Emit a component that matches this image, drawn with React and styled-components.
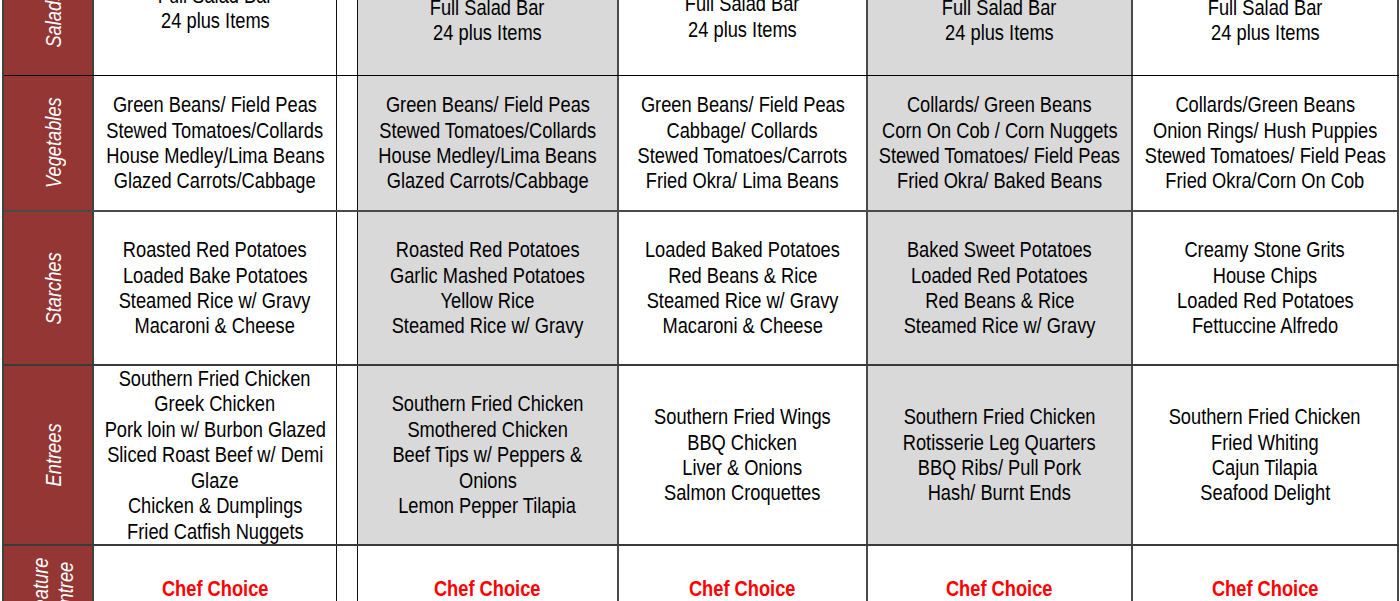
import React from "react";
import styled, { createGlobalStyle } from "styled-components";

const GlobalStyle = createGlobalStyle`
  *, *::before, *::after {
    box-sizing: border-box;
  }
  html, body {
    margin: 0;
    padding: 0;
    background: #ffffff;
    overflow: hidden;
  }
  body {
    font-family: "Liberation Sans", Arial, sans-serif;
  }
`;

const COLUMNS = "90px 243px 21px 261px 249px 265px 266px";

const rows = [
  {
    label: "Salads",
    height: 111,
    divider: "1px solid #000",
    cells: [
      { lines: ["Full Salad Bar", "24 plus Items"], lift: 24 },
      { lines: ["Full Salad Bar", "24 plus Items"], lift: 0 },
      { lines: ["Full Salad Bar", "24 plus Items"], lift: 7 },
      { lines: ["Full Salad Bar", "24 plus Items"], lift: 0 },
      { lines: ["Full Salad Bar", "24 plus Items"], lift: 0 },
    ],
  },
  {
    label: "Vegetables",
    height: 136,
    divider: "2px solid #4a4a4a",
    cells: [
      { lines: ["Green Beans/ Field Peas", "Stewed Tomatoes/Collards", "House Medley/Lima Beans", "Glazed Carrots/Cabbage"] },
      { lines: ["Green Beans/ Field Peas", "Stewed Tomatoes/Collards", "House Medley/Lima Beans", "Glazed Carrots/Cabbage"] },
      { lines: ["Green Beans/ Field Peas", "Cabbage/ Collards", "Stewed Tomatoes/Carrots", "Fried Okra/ Lima Beans"] },
      { lines: ["Collards/ Green Beans", "Corn On Cob / Corn Nuggets", "Stewed Tomatoes/ Field Peas", "Fried Okra/ Baked Beans"] },
      { lines: ["Collards/Green Beans", "Onion Rings/ Hush Puppies", "Stewed Tomatoes/ Field Peas", "Fried Okra/Corn On Cob"] },
    ],
  },
  {
    label: "Starches",
    height: 154,
    divider: "2px solid #3a3a3a",
    cells: [
      { lines: ["Roasted Red Potatoes", "Loaded Bake Potatoes", "Steamed Rice w/ Gravy", "Macaroni & Cheese"] },
      { lines: ["Roasted Red Potatoes", "Garlic Mashed Potatoes", "Yellow Rice", "Steamed Rice w/ Gravy"] },
      { lines: ["Loaded Baked Potatoes", "Red Beans & Rice", "Steamed Rice w/ Gravy", "Macaroni & Cheese"] },
      { lines: ["Baked Sweet Potatoes", "Loaded Red Potatoes", "Red Beans & Rice", "Steamed Rice w/ Gravy"] },
      { lines: ["Creamy Stone Grits", "House Chips", "Loaded Red Potatoes", "Fettuccine Alfredo"] },
    ],
  },
  {
    label: "Entrees",
    height: 180,
    divider: "2px solid #3a3a3a",
    cells: [
      {
        lines: [
          "Southern Fried Chicken",
          "Greek Chicken",
          "Pork loin w/ Burbon Glazed",
          "Sliced Roast Beef w/ Demi",
          "Glaze",
          "Chicken & Dumplings",
          "Fried Catfish Nuggets",
        ],
      },
      { lines: ["Southern Fried Chicken", "Smothered Chicken", "Beef Tips w/ Peppers &", "Onions", "Lemon Pepper Tilapia"] },
      { lines: ["Southern Fried Wings", "BBQ Chicken", "Liver & Onions", "Salmon Croquettes"] },
      { lines: ["Southern Fried Chicken", "Rotisserie Leg Quarters", "BBQ Ribs/ Pull Pork", "Hash/ Burnt Ends"] },
      { lines: ["Southern Fried Chicken", "Fried Whiting", "Cajun Tilapia", "Seafood Delight"] },
    ],
  },
  {
    label: "Feature Entree",
    height: 88,
    divider: "2px solid #3a3a3a",
    special: true,
    cells: [
      { lines: ["Chef Choice"] },
      { lines: ["Chef Choice"] },
      { lines: ["Chef Choice"] },
      { lines: ["Chef Choice"] },
      { lines: ["Chef Choice"] },
    ],
  },
];

const shaded = [false, true, false, true, false];
const borders = ["1px solid #111", "2px solid #4a4a4a", "2px solid #4a4a4a", "2px solid #4a4a4a", "2px solid #4a4a4a"];

const App = () => (
  <>
    <GlobalStyle />
    <Page>
      <Table>
        {rows.map((row) => (
          <Row key={row.label} $height={row.height} $divider={row.divider}>
            <LabelCell>
              <LabelText>{row.label}</LabelText>
            </LabelCell>
            {row.cells.map((cell, i) => (
              <React.Fragment key={i}>
                <MenuCell
                  $shaded={shaded[i] && !row.special}
                  $edge={borders[i]}
                  $lift={cell.lift || 0}
                >
                  {cell.lines.map((line, j) =>
                    row.special ? <ChefLine key={j}>{line}</ChefLine> : <Line key={j}>{line}</Line>
                  )}
                </MenuCell>
                {i === 0 && <Spacer />}
              </React.Fragment>
            ))}
          </Row>
        ))}
      </Table>
    </Page>
  </>
);

const Page = styled.div`
  width: 1400px;
  height: 601px;
  overflow: hidden;
  padding-left: 2px;
`;

const Table = styled.div`
  margin-top: -35px;
  display: flex;
  flex-direction: column;
  width: fit-content;
  border-left: 2px solid #404040;
`;

const Row = styled.div`
  display: grid;
  grid-template-columns: ${COLUMNS};
  height: ${(p) => p.$height}px;
  border-bottom: ${(p) => p.$divider};
`;

const LabelCell = styled.div`
  background: #943634;
  border-right: 2px solid #404040;
  display: flex;
  align-items: center;
  justify-content: center;
  padding-left: 10px;
  overflow: hidden;
`;

const LabelText = styled.div`
  writing-mode: vertical-rl;
  transform: rotate(180deg) scaleY(0.83);
  color: #ffffff;
  font-size: 22px;
  font-style: italic;
  line-height: 25px;
  text-align: center;
  width: min-content;
`;

const MenuCell = styled.div`
  background: ${(p) => (p.$shaded ? "#d9d9d9" : "#ffffff")};
  border-right: ${(p) => p.$edge};
  display: flex;
  flex-direction: column;
  align-items: center;
  justify-content: center;
  padding-bottom: ${(p) => p.$lift}px;
  text-align: center;
`;

const Spacer = styled.div`
  background: #ffffff;
  border-right: 1px solid #111;
`;

const Line = styled.div`
  color: #000;
  font-size: 22px;
  line-height: 25.4px;
  white-space: nowrap;
  transform: scaleX(0.83);
`;

const ChefLine = styled(Line)`
  color: #ff0000;
  font-weight: bold;
`;

export default App;
